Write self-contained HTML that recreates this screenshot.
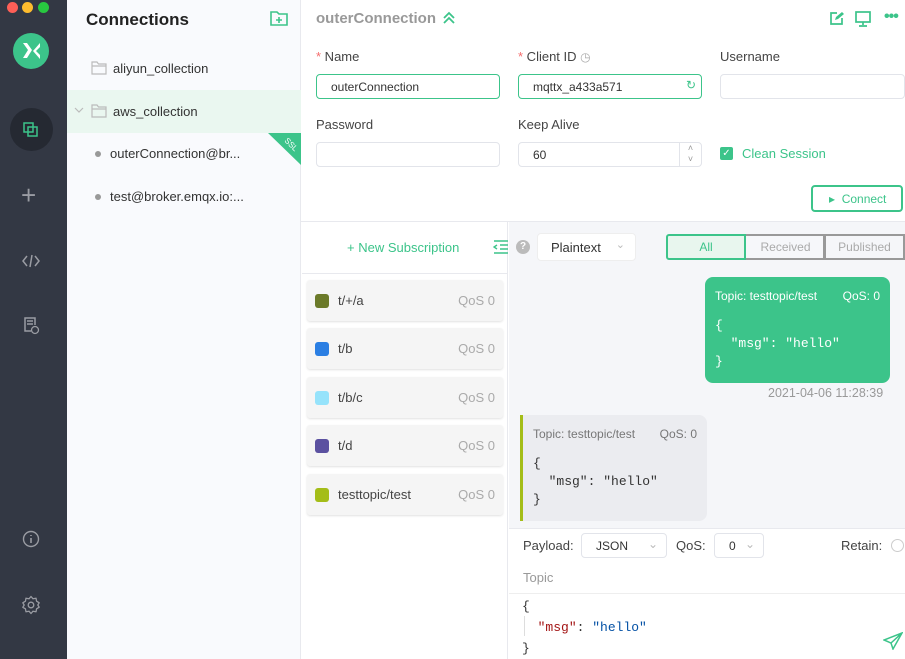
<!DOCTYPE html>
<html><head><meta charset="utf-8"><style>
*{box-sizing:border-box;margin:0;padding:0}
body{width:905px;height:659px;overflow:hidden;font-family:"Liberation Sans",sans-serif;position:relative;background:#fff;color:#333}
.a{position:absolute}
.inp{position:absolute;height:25px;border:1px solid #e2e4ea;border-radius:4px;background:#fff;font-size:12px;color:#333;padding:5px 0 0 14px}
.lbl{position:absolute;font-size:13px;color:#444}
.sub{position:absolute;left:307px;width:196px;height:41px;background:#f5f5f5;border-radius:3px;box-shadow:0 1px 2px rgba(0,0,0,.12)}
.sub i{position:absolute;left:8px;top:14px;width:14px;height:14px;border-radius:3px}
.sub span{position:absolute;left:31px;top:13px;font-size:13px;color:#444}
.sub b{position:absolute;right:8px;top:13px;font-size:13px;color:#aaa;font-weight:normal}
.mono{font-family:"Liberation Mono",monospace;font-size:13px;line-height:20px}
</style></head><body>
<!-- sidebar -->
<div class="a" style="left:0;top:0;width:67px;height:659px;background:#333844"></div>
<div class="a" style="left:7px;top:2px;width:11px;height:11px;border-radius:50%;background:#fe5f57"></div>
<div class="a" style="left:22px;top:2px;width:11px;height:11px;border-radius:50%;background:#febc2e"></div>
<div class="a" style="left:38px;top:2px;width:11px;height:11px;border-radius:50%;background:#28c840"></div>
<div class="a" style="left:13px;top:33px;width:36px;height:36px;border-radius:50%;background:#3cc48a"></div>
<svg class="a" style="left:13px;top:33px" width="36" height="36"><path d="M10 10h4l5 7-5 8h-4l5-8z" fill="#fff"/><path d="M27 10v4l-4 4 4 4v4l-7-8z" fill="#fff"/></svg>
<div class="a" style="left:10px;top:108px;width:43px;height:43px;border-radius:50%;background:#252932"></div>
<svg class="a" style="left:22px;top:121px" width="18" height="18"><rect x="2" y="2" width="9" height="9" fill="none" stroke="#3cc48a" stroke-width="1.5"/><rect x="6" y="6" width="9" height="9" fill="none" stroke="#3cc48a" stroke-width="1.5"/></svg>
<div class="a" style="left:21px;top:180px;color:#9a9ca3;font-size:26px;line-height:30px">+</div>
<svg class="a" style="left:21px;top:251px" width="20" height="20"><path d="M6 5L2 10l4 5M14 5l4 5-4 5M11 4l-2 12" fill="none" stroke="#9a9ca3" stroke-width="1.5"/></svg>
<svg class="a" style="left:22px;top:316px" width="20" height="20"><path d="M9 15H3V2h10v7M5 5h6M5 8h6" fill="none" stroke="#9a9ca3" stroke-width="1.5"/><circle cx="13" cy="14" r="3.5" fill="none" stroke="#9a9ca3" stroke-width="1.3"/></svg>
<svg class="a" style="left:21px;top:529px" width="20" height="20"><circle cx="10" cy="10" r="7.5" fill="none" stroke="#9a9ca3" stroke-width="1.4"/><path d="M10 9v5M10 6v1" stroke="#9a9ca3" stroke-width="1.6"/></svg>
<svg class="a" style="left:21px;top:595px" width="20" height="20"><path d="M10 1.5l2 2.3 3-.6.6 3 2.6 1.6-1.4 2.2 1.4 2.2-2.6 1.6-.6 3-3-.6-2 2.3-2-2.3-3 .6-.6-3L1.8 12.3 3.2 10 1.8 7.8 4.4 6.2l.6-3 3 .6z" fill="none" stroke="#9a9ca3" stroke-width="1.3" stroke-linejoin="round"/><circle cx="10" cy="10" r="2.8" fill="none" stroke="#9a9ca3" stroke-width="1.3"/></svg>
<!-- connections -->
<div class="a" style="left:67px;top:0;width:234px;height:659px;background:#f9fafd;border-right:1px solid #e8e9ee"></div>
<div class="a" style="left:86px;top:10px;font-size:17px;font-weight:bold;color:#222">Connections</div>
<svg class="a" style="left:270px;top:10px" width="18" height="16"><path d="M1 2h6l2 2h8v11H1z" fill="none" stroke="#3cc48a" stroke-width="1.6"/><path d="M9 7v6M6 10h6" stroke="#3cc48a" stroke-width="1.6"/></svg>
<svg class="a" style="left:91px;top:61px" width="16" height="14"><path d="M1 1h5l1.5 2H15v10H1z M1 5h14" fill="none" stroke="#bbb" stroke-width="1.2"/></svg>
<div class="a" style="left:113px;top:61px;font-size:13px;color:#333">aliyun_collection</div>
<div class="a" style="left:67px;top:90px;width:234px;height:43px;background:#eaf7f0"></div>
<svg class="a" style="left:74px;top:107px" width="10" height="6"><path d="M1 1l4 4 4-4" fill="none" stroke="#bbb" stroke-width="1.2"/></svg>
<svg class="a" style="left:91px;top:104px" width="16" height="14"><path d="M1 1h5l1.5 2H15v10H1z M1 5h14" fill="none" stroke="#bbb" stroke-width="1.2"/></svg>
<div class="a" style="left:113px;top:104px;font-size:13px;color:#333">aws_collection</div>
<svg class="a" style="left:268px;top:133px" width="33" height="32"><path d="M0 0h33v32z" fill="#3cc48a"/><text x="16" y="8" fill="#fff" font-size="8" font-family="Liberation Sans" transform="rotate(45 16 8)">SSL</text></svg>
<div class="a" style="left:95px;top:151px;width:6px;height:6px;border-radius:50%;background:#999"></div>
<div class="a" style="left:110px;top:146px;font-size:13px;color:#333">outerConnection@br...</div>
<div class="a" style="left:95px;top:194px;width:6px;height:6px;border-radius:50%;background:#999"></div>
<div class="a" style="left:110px;top:189px;font-size:13px;color:#333">test@broker.emqx.io:...</div>
<!-- header -->
<div class="a" style="left:316px;top:10px;font-size:15px;font-weight:bold;color:#999">outerConnection</div>
<svg class="a" style="left:442px;top:11px" width="14" height="14"><path d="M2 7l5-5 5 5M2 12l5-5 5 5" fill="none" stroke="#3cc48a" stroke-width="1.8"/></svg>
<svg class="a" style="left:829px;top:11px" width="15" height="15"><path d="M8 2H2v11h11V7" fill="none" stroke="#3cc48a" stroke-width="1.7"/><path d="M6 9l1-3 6-5 2 2-6 5z" fill="#3cc48a"/></svg>
<svg class="a" style="left:855px;top:11px" width="16" height="16"><rect x="1" y="1" width="14" height="10" fill="none" stroke="#3cc48a" stroke-width="1.7"/><path d="M8 11v3M4 15h8" stroke="#3cc48a" stroke-width="1.7"/></svg>
<div class="a" style="left:884px;top:8px;font-size:16px;color:#3cc48a;font-weight:bold;letter-spacing:-1px">•••</div>
<div class="lbl" style="left:316px;top:49px"><span style="color:#f56c6c">*</span> Name</div>
<div class="lbl" style="left:518px;top:49px"><span style="color:#f56c6c">*</span> Client ID <span style="color:#aaa;font-size:12px">&#9719;</span></div>
<div class="lbl" style="left:720px;top:49px">Username</div>
<div class="inp" style="left:316px;top:74px;width:184px;border-color:#3cc48a">outerConnection</div>
<div class="inp" style="left:518px;top:74px;width:184px;border-color:#3cc48a">mqttx_a433a571<span style="position:absolute;right:5px;top:3px;color:#3cc48a;font-size:12px">&#8635;</span></div>
<div class="inp" style="left:720px;top:74px;width:185px"></div>
<div class="lbl" style="left:316px;top:117px">Password</div>
<div class="lbl" style="left:518px;top:117px">Keep Alive</div>
<div class="inp" style="left:316px;top:142px;width:184px"></div>
<div class="inp" style="left:518px;top:142px;width:184px">60<div style="position:absolute;right:0;top:0;width:22px;height:23px;border-left:1px solid #e2e4ea;font-size:9px;color:#999;text-align:center;line-height:11px">&#708;<br>&#709;</div></div>
<div class="a" style="left:720px;top:147px;width:13px;height:13px;background:#3cc48a;border-radius:2px;color:#fff;font-size:10px;text-align:center;line-height:13px">✓</div>
<div class="a" style="left:742px;top:146px;font-size:13px;color:#3cc48a">Clean Session</div>
<div class="a" style="left:811px;top:185px;width:92px;height:27px;border:2px solid #3cc48a;border-radius:4px;color:#3cc48a;font-size:12px;padding:5px 0 0 16px">&#9656;&nbsp;&nbsp;Connect</div>
<div class="a" style="left:301px;top:221px;width:604px;height:1px;background:#e8e9ee"></div>
<!-- subs -->
<div class="a" style="left:301px;top:222px;width:207px;height:437px;background:#fff;border-right:1px solid #e8e9ee"></div>
<div class="a" style="left:302px;top:273px;width:206px;height:1px;background:#e8e9ee"></div>
<div class="a" style="left:347px;top:240px;font-size:13px;color:#3cc48a">+ New Subscription</div>
<svg class="a" style="left:493px;top:240px" width="15" height="14"><path d="M1 1h14M7 5h8M7 9h8M1 13h14M4 5L1 7l3 2" fill="none" stroke="#3cc48a" stroke-width="1.4"/></svg>
<div class="sub" style="top:280px"><i style="background:#6b7a29"></i><span>t/+/a</span><b>QoS 0</b></div>
<div class="sub" style="top:328px"><i style="background:#2b7fe3"></i><span>t/b</span><b>QoS 0</b></div>
<div class="sub" style="top:377px"><i style="background:#96e3fb"></i><span>t/b/c</span><b>QoS 0</b></div>
<div class="sub" style="top:425px"><i style="background:#5b51a0"></i><span>t/d</span><b>QoS 0</b></div>
<div class="sub" style="top:474px"><i style="background:#a4bd18"></i><span>testtopic/test</span><b>QoS 0</b></div>
<!-- messages -->
<div class="a" style="left:509px;top:222px;width:396px;height:306px;background:#f5f6f9"></div>
<div class="a" style="left:516px;top:240px;width:14px;height:14px;border-radius:50%;background:#bbb;color:#fff;font-size:10px;text-align:center;line-height:14px;font-weight:bold">?</div>
<div class="a" style="left:537px;top:233px;width:99px;height:28px;background:#fff;border:1px solid #eee;border-radius:4px;font-size:13px;padding:6px 0 0 13px;color:#333">Plaintext<span style="position:absolute;right:10px;top:4px;color:#bbb;font-size:11px">&#8964;</span></div>
<div class="a" style="left:666px;top:234px;width:80px;height:26px;background:#e8f6ee;border:2px solid #3cc48a;border-radius:3px 0 0 3px;font-size:12px;text-align:center;line-height:22px;color:#3cc48a">All</div>
<div class="a" style="left:746px;top:234px;width:79px;height:26px;border:2px solid #999;border-left:none;background:#f6f7fa"></div>
<div class="a" style="left:746px;top:234px;width:79px;height:26px;font-size:12px;text-align:center;line-height:26px;color:#aaa">Received</div>
<div class="a" style="left:825px;top:234px;width:80px;height:26px;border:2px solid #999;border-left:1px solid #999;font-size:12px;text-align:center;line-height:22px;color:#aaa">Published</div>
<div class="a" style="left:705px;top:277px;width:185px;height:106px;background:#3cc48a;border-radius:8px;color:#fff">
<div style="position:absolute;left:10px;top:12px;font-size:12px">Topic: testtopic/test</div><div style="position:absolute;right:10px;top:12px;font-size:12px">QoS: 0</div>
<div class="mono" style="position:absolute;left:10px;top:40px;line-height:18px;white-space:pre">{
  "msg": "hello"
}</div></div>
<div class="a" style="left:768px;top:386px;font-size:12.5px;color:#999">2021-04-06 11:28:39</div>
<div class="a" style="left:520px;top:415px;width:187px;height:106px;background:#ebecf0;border-left:3px solid #a4bd18;border-radius:0 8px 8px 0;color:#555">
<div style="position:absolute;left:10px;top:12px;font-size:12px;color:#777">Topic: testtopic/test</div><div style="position:absolute;right:10px;top:12px;font-size:12px;color:#777">QoS: 0</div>
<div class="mono" style="position:absolute;left:10px;top:40px;line-height:18px;white-space:pre;color:#333">{
  "msg": "hello"
}</div></div>
<!-- publish -->
<div class="a" style="left:509px;top:528px;width:396px;height:1px;background:#e8e9ee"></div>
<div class="a" style="left:523px;top:538px;font-size:13px;color:#444">Payload:</div>
<div class="a" style="left:581px;top:533px;width:86px;height:25px;border:1px solid #e2e4ea;border-radius:4px;font-size:12px;padding:5px 0 0 14px">JSON<span style="position:absolute;right:8px;top:3px;color:#bbb">&#8964;</span></div>
<div class="a" style="left:676px;top:538px;font-size:13px;color:#444">QoS:</div>
<div class="a" style="left:714px;top:533px;width:50px;height:25px;border:1px solid #e2e4ea;border-radius:4px;font-size:12px;padding:5px 0 0 14px">0<span style="position:absolute;right:8px;top:3px;color:#bbb">&#8964;</span></div>
<div class="a" style="left:841px;top:538px;font-size:13px;color:#444">Retain:</div>
<div class="a" style="left:891px;top:539px;width:13px;height:13px;border:1px solid #ccc;border-radius:50%"></div>
<div class="a" style="left:523px;top:570px;font-size:13px;color:#999">Topic</div>
<div class="a" style="left:509px;top:593px;width:396px;height:1px;background:#eee"></div>
<div class="a" style="left:524px;top:616px;width:1px;height:20px;background:#ddd"></div>
<div class="a mono" style="left:522px;top:596px;line-height:21px;white-space:pre;color:#333">{
  <span style="color:#a31515">"msg"</span>: <span style="color:#0451a5">"hello"</span>
}</div>
<svg class="a" style="left:883px;top:632px" width="20" height="18"><path d="M19 1L1 8l7 3 2 6z M19 1L8 11" fill="none" stroke="#3cc48a" stroke-width="1.5"/></svg>
</body></html>
